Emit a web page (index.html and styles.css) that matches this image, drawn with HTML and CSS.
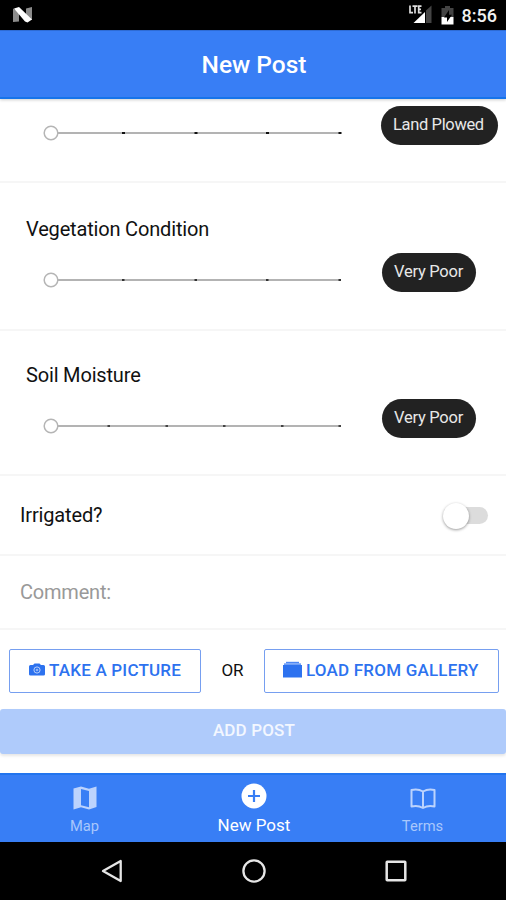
FILE: index.html
```html
<!DOCTYPE html>
<html lang="en">
<head>
<meta charset="utf-8">
<title>New Post</title>
<link rel="stylesheet" href="styles.css">
</head>
<body>
<div class="phone">
  <div class="status">
    <svg class="status-logo" width="20" height="16" viewBox="0 0 20 16"><path fill="#8c8c8c" d="M0 1.500 6 4v10.500L0 15zM13 1.500 19 0v13l-6 0z"/><path fill="#fff" d="M1 1.500 6 0 19 12.500 14.500 15.500 12 14.500z"/></svg>
    <div class="status-right">
      <svg width="23" height="19" viewBox="0 0 23 19"><path fill="#444" d="M17 5.500 22.500 0.500V18H17z"/><path fill="#fff" d="M4.500 18 16 7v11z"/><path fill="none" stroke="#ddd" stroke-width="1.700" d="M1 .5v7.200h3M3.500 1.200h5M6 1v7.500M12.500 1.200H9.700v6.500h2.800M9.500 4.400h2.500"/></svg>
      <svg class="battery" width="13" height="19" viewBox="0 0 13 19"><path fill="#444" d="M4 0h5v2h3.500v9H.5V2H4z"/><path fill="#fff" d="M.5 11h12v7.500H.5z"/><path fill="#000" d="M8 4 3 11.500h3V16l5-7.200H8z"/></svg>
      <span class="clock">8:56</span>
    </div>
  </div>
  <header class="header">New Post</header>
  <main class="content">
    <section class="item item-first">
      <div class="range">
        <svg class="slider" width="300" height="16" viewBox="0 0 300 16"><path stroke="#b3b3b3" stroke-width="2" d="M15 8H298"/><path stroke="#111" stroke-width="2" d="M79 8h3M151.500 8h3M223 8h3M295.500 8h3"/><circle cx="8" cy="8" r="6.800" fill="#fff" stroke="#b5b5b5" stroke-width="1.500"/></svg>
        <span class="chip chip-wide">Land Plowed</span>
      </div>
    </section>
    <section class="item item-second">
      <h2 class="label">Vegetation Condition</h2>
      <div class="range">
        <svg class="slider" width="300" height="16" viewBox="0 0 300 16"><path stroke="#b3b3b3" stroke-width="2" d="M15 8H298"/><path stroke="#333" stroke-width="2" d="M79 8h2.500M151.500 8h2.500M223 8h2.500M295.500 8h2.500"/><circle cx="8" cy="8" r="6.800" fill="#fff" stroke="#b5b5b5" stroke-width="1.500"/></svg>
        <span class="chip">Very Poor</span>
      </div>
    </section>
    <section class="item item-third">
      <h2 class="label">Soil Moisture</h2>
      <div class="range">
        <svg class="slider" width="300" height="16" viewBox="0 0 300 16"><path stroke="#b3b3b3" stroke-width="2" d="M15 8H298"/><path stroke="#444" stroke-width="2" d="M64.500 8h2.500M122.500 8h2.500M180 8h2.500M238 8h2.500M295.500 8h2.500"/><circle cx="8" cy="8" r="6.800" fill="#fff" stroke="#b5b5b5" stroke-width="1.500"/></svg>
        <span class="chip">Very Poor</span>
      </div>
    </section>
    <section class="item item-row">
      <span>Irrigated?</span>
      <span class="toggle"><span class="knob"></span></span>
    </section>
    <section class="item item-comment">Comment:</section>
    <div class="actions">
      <div class="btn btn-camera">
        <svg width="16" height="13" viewBox="0 0 16 13"><path fill="#2d72ef" d="M1.500 2H4L5.500.5h5L12 2h2.500q1.500 0 1.500 1.500v7.700q0 1.300-1.500 1.300h-13Q0 12.500 0 11.200V3.500Q0 2 1.500 2z"/><circle cx="8" cy="7" r="3.100" fill="none" stroke="#b9d0fb" stroke-width="1"/><circle cx="8" cy="7" r="1.300" fill="#8fb4f8"/></svg>
        <span>TAKE A PICTURE</span>
      </div>
      <span class="or">OR</span>
      <div class="btn btn-gallery">
        <svg width="19" height="17" viewBox="0 0 19 17"><path fill="#2d72ef" d="M0 4h19v12.500H0z"/><path fill="#6f9ff6" d="M1 2.300h17v1.700H1z"/><path fill="#4d88f4" d="M3 .8h13v1.500H3z"/></svg>
        <span>LOAD FROM GALLERY</span>
      </div>
    </div>
    <div class="submit">ADD POST</div>
  </main>
  <nav class="tabs">
    <div class="tab">
      <svg width="24" height="24" viewBox="0 0 24 24"><path fill="#bcd3fd" fill-rule="evenodd" d="M.5 2.500 8 .5l8 2.200 7.500-2.200v20.500L16 23.500l-8-2.200-7.500 2.200zM8 3v16.300l8 2V5z"/></svg>
      <span>Map</span>
    </div>
    <div class="tab tab-active">
      <svg width="26" height="26" viewBox="0 0 26 26"><circle cx="13" cy="13" r="12.500" fill="#fff"/><path stroke="#387ef5" stroke-width="2.200" d="M13 7v12M7 13h12"/></svg>
      <span>New Post</span>
    </div>
    <div class="tab">
      <svg width="26" height="22" viewBox="0 0 26 22"><path fill="none" stroke="#bcd3fd" stroke-width="2" stroke-linejoin="round" d="M1.500 2Q8 .5 13 3.500 18 .5 24.500 2v16.500Q18 17 13 20 8 17 1.500 18.500zM13 3.500V20"/></svg>
      <span>Terms</span>
    </div>
  </nav>
  <div class="android">
    <svg width="22" height="24" viewBox="0 0 22 24"><path fill="none" stroke="#e6e6e6" stroke-width="2.300" stroke-linejoin="round" d="M19.700 2v20L2 12z"/></svg>
    <svg width="24" height="24" viewBox="0 0 24 24"><circle cx="12" cy="12" r="10.600" fill="none" stroke="#e6e6e6" stroke-width="2.300"/></svg>
    <svg width="22" height="22" viewBox="0 0 22 22"><rect x="1.700" y="1.700" width="18.600" height="18.600" rx=".5" fill="none" stroke="#e6e6e6" stroke-width="2.500"/></svg>
  </div>
</div>
</body>
</html>
```
FILE: styles.css
```css
* { box-sizing: border-box; }
body { margin: 0; background: #fff; color: #111; font-family: Roboto, sans-serif; }
svg { display: block; flex: none; }
span { white-space: nowrap; }
.phone { width: 506px; height: 900px; display: flex; flex-direction: column; overflow: hidden; }
.status { height: 30px; flex: none; background: #000; display: flex; justify-content: space-between; padding: 7px 9px 0 13px; }
.status-right { display: flex; align-items: flex-start; margin-top: -2px; }
.battery { margin: 1px 8px 0 9px; }
.clock { color: #f2f2f2; font-size: 18px; font-weight: 500; line-height: 22px; }
.header { height: 69px; flex: none; background: #387ef5; border-top: 1px solid #2e6bd4; border-bottom: 2px solid #1674ea; box-shadow: 0 1px 3px rgba(0, 0, 0, .2); z-index: 1; color: #fff; font-size: 24.5px; font-weight: 500; line-height: 67px; text-align: center; padding-left: 2px; }
.content { height: 674px; flex: none; }
.item { border-bottom: 2px solid #f6f6f6; }
.item-first { height: 84px; padding-top: 7px; }
.item-second { height: 148px; padding-top: 33px; }
.item-third { height: 145px; padding-top: 31px; }
.label { margin: 0 0 11px 26px; font-size: 20px; font-weight: 400; line-height: 26px; letter-spacing: -.17px; }
.range { display: flex; align-items: flex-start; padding-left: 43px; }
.slider { margin: 19px 39px 0 0; }
.chip { width: 94px; height: 39px; padding-left: 12px; border-radius: 20px; background: #222; color: #e8e8e8; font-size: 16.5px; letter-spacing: -.25px; line-height: 38px; }
.chip-wide { width: 117px; margin-left: -1px; letter-spacing: -.35px; }
.item-row { height: 80px; padding: 0 18px 0 20px; display: flex; align-items: center; justify-content: space-between; font-size: 20px; letter-spacing: -.15px; }
.toggle { width: 44px; height: 17px; border-radius: 9px; background: #dcdcdc; display: flex; align-items: center; margin-top: 1px; }
.knob { width: 26px; height: 26px; flex: none; border-radius: 50%; background: #fff; box-shadow: 0 1px 3px rgba(0, 0, 0, .4); margin-left: -1px; }
.item-comment { height: 74px; padding-left: 20px; color: #999; font-size: 20px; letter-spacing: -.2px; line-height: 72px; }
.actions { display: flex; align-items: center; justify-content: space-between; padding: 19px 7px 0 9px; }
.btn { height: 44px; display: flex; align-items: center; border: 1px solid #769ff0; border-radius: 2px; color: #2d72ef; font-size: 17px; font-weight: 500; letter-spacing: .2px; padding-bottom: 3px; }
.btn-camera { width: 192px; padding-left: 19px; gap: 4px; }
.btn-gallery { width: 235px; padding-left: 18px; gap: 4px; }
.or { font-size: 17px; padding-bottom: 2px; }
.submit { height: 45px; margin-top: 16px; background: #afcbfb; border-radius: 3px; box-shadow: 0 2px 3px rgba(0, 0, 0, .1); color: #f3f7ff; font-size: 17px; font-weight: 500; letter-spacing: .15px; line-height: 43px; text-align: center; padding-left: 2px; }
.tabs { height: 69px; flex: none; background: #387ef5; border-top: 2px solid #2274ee; display: grid; grid-template-columns: 169px 170px 167px; }
.tab { display: flex; flex-direction: column; align-items: center; justify-content: flex-end; gap: 6px; padding-bottom: 6px; color: #a9c7fc; font-size: 14.7px; line-height: 20px; }
.tab-active { color: #fff; font-size: 17px; gap: 6px; padding-bottom: 7px; }
.android { flex: 1; background: #000; display: flex; align-items: center; justify-content: space-between; padding: 0 99px 0 101px; }
```
